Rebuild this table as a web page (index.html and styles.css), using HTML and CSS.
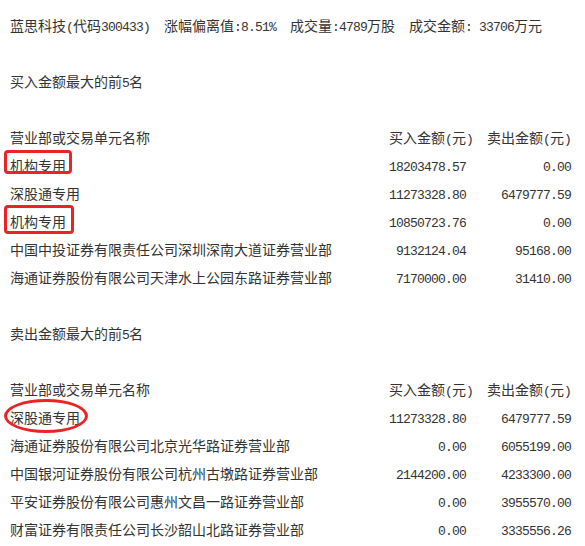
FILE: index.html
```html
<!DOCTYPE html>
<html lang="zh-CN">
<head>
    <meta charset="UTF-8">
    <meta name="viewport" content="width=device-width, initial-scale=1.0">
    <title>龙虎榜 蓝思科技</title>
    <link rel="stylesheet" href="styles.css">
</head>
<body>
    <div class="summary">
        蓝思科技<span class="n">(</span>代码<span class="n">300433)  </span>涨幅偏离值<span class="n">:8.51%  </span>成交量<span class="n">:4789</span>万股<span class="n">  </span>成交金额<span class="n">: 33706</span>万元
    </div>

    <h2 class="section-title">买入金额最大的前<span class="n">5</span>名</h2>
    <div class="trade-table">
        <div class="col-name">营业部或交易单元名称</div>
        <div class="col-head">买入金额<span class="n">(</span>元<span class="n">)</span></div>
        <div class="col-head">卖出金额<span class="n">(</span>元<span class="n">)</span></div>

        <div class="col-name"><span class="mark box">机构专用</span></div>
        <div class="num buy">18203478.57</div>
        <div class="num">0.00</div>

        <div class="col-name">深股通专用</div>
        <div class="num buy">11273328.80</div>
        <div class="num">6479777.59</div>

        <div class="col-name"><span class="mark box box-wide">机构专用</span></div>
        <div class="num buy">10850723.76</div>
        <div class="num">0.00</div>

        <div class="col-name">中国中投证券有限责任公司深圳深南大道证券营业部</div>
        <div class="num buy">9132124.04</div>
        <div class="num">95168.00</div>

        <div class="col-name">海通证券股份有限公司天津水上公园东路证券营业部</div>
        <div class="num buy">7170000.00</div>
        <div class="num">31410.00</div>
    </div>

    <h2 class="section-title">卖出金额最大的前<span class="n">5</span>名</h2>
    <div class="trade-table">
        <div class="col-name">营业部或交易单元名称</div>
        <div class="col-head">买入金额<span class="n">(</span>元<span class="n">)</span></div>
        <div class="col-head">卖出金额<span class="n">(</span>元<span class="n">)</span></div>

        <div class="col-name"><span class="mark ring">深股通专用</span></div>
        <div class="num buy">11273328.80</div>
        <div class="num">6479777.59</div>

        <div class="col-name">海通证券股份有限公司北京光华路证券营业部</div>
        <div class="num buy">0.00</div>
        <div class="num">6055199.00</div>

        <div class="col-name">中国银河证券股份有限公司杭州古墩路证券营业部</div>
        <div class="num buy">2144200.00</div>
        <div class="num">4233300.00</div>

        <div class="col-name">平安证券股份有限公司惠州文昌一路证券营业部</div>
        <div class="num buy">0.00</div>
        <div class="num">3955570.00</div>

        <div class="col-name">财富证券有限责任公司长沙韶山北路证券营业部</div>
        <div class="num buy">0.00</div>
        <div class="num">3335556.26</div>
    </div>
</body>
</html>
```

FILE: styles.css
```css
body {
    margin: 0;
    padding: 11px 10px;
    background: #fff;
    color: #333;
    font-family: "Noto Sans CJK SC", sans-serif;
    font-size: 14px;
    line-height: 28px;
}

/* half-width ascii runs, 7px per char like the original */
.n, .num {
    font-family: "Liberation Mono", monospace;
    font-size: 13px;
    letter-spacing: -0.8px;
    line-height: 1;
    white-space: pre;
}

.summary {
    height: 28px;
    white-space: nowrap;
}

.section-title {
    height: 28px;
    margin: 28px 0;
    font-size: 14px;
    font-weight: normal;
}

.trade-table {
    display: grid;
    grid-template-columns: 365px 84px 84px;
    grid-auto-rows: 28px;
    column-gap: 14px;
}

.col-name, .col-head {
    white-space: nowrap;
}

.num {
    padding-top: 3px;
    text-align: right;
    line-height: 28px;
}

.num.buy {
    padding-right: 7px;
}

/* red marks drawn over the screenshot */
.mark {
    position: relative;
    display: inline-block;
}

.mark::before {
    content: "";
    position: absolute;
    border: 3px solid #ec2224;
}

.box::before {
    left: -6px;
    right: -6px;
    top: -1px;
    bottom: 5px;
    border-radius: 4px;
}

.box-wide::before {
    right: -8px;
    top: -2px;
    bottom: 1px;
}

.ring::before {
    left: -6px;
    right: -8px;
    top: -4px;
    bottom: -2px;
    border-radius: 50%;
}
```
